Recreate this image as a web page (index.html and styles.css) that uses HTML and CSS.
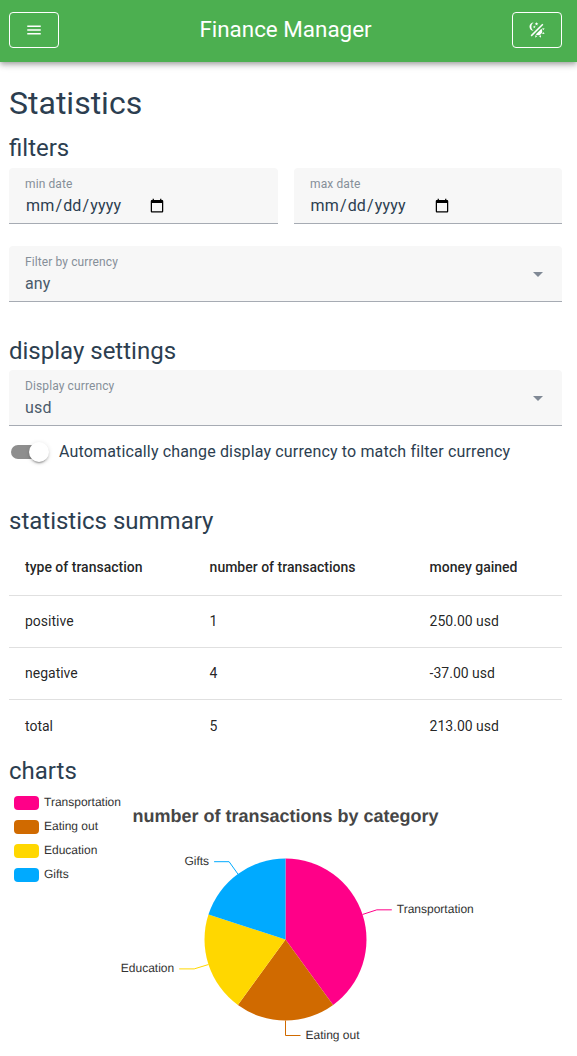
FILE: index.html
```html
<!DOCTYPE html>
<html lang="en">
<head>
<meta charset="utf-8">
<title>Finance Manager</title>
<link rel="stylesheet" href="styles.css">
</head>
<body>
<header class="app-bar">
  <button class="icon-button" aria-label="Menu">
    <svg class="icon" viewBox="0 0 24 24"><path d="M3,6H21V8H3V6M3,11H21V13H3V11M3,16H21V18H3V16Z"/></svg>
  </button>
  <span class="app-title">Finance Manager</span>
  <button class="icon-button" aria-label="Theme">
    <svg class="icon" viewBox="0 0 24 24"><path d="M7.5,2C5.71,3.15 4.5,5.18 4.5,7.5C4.5,9.82 5.71,11.85 7.53,13C4.46,13 2,10.54 2,7.5A5.5,5.5 0 0,1 7.5,2M19.07,3.5L20.5,4.93L4.93,20.5L3.5,19.07L19.07,3.5M12.89,5.93L11.41,5L9.97,6L10.39,4.3L9,3.24L10.75,3.12L11.33,1.47L12,3.1L13.73,3.13L12.38,4.26L12.89,5.93M9.59,9.54L8.43,8.81L7.31,9.59L7.65,8.27L6.56,7.44L7.92,7.35L8.37,6.06L8.88,7.33L10.24,7.36L9.19,8.23L9.59,9.54M19,13.5A5.5,5.5 0 0,1 13.5,19C12.28,19 11.15,18.6 10.24,17.93L17.93,10.24C18.6,11.15 19,12.28 19,13.5M14.6,20.08L17.37,18.93L17.13,22.28L14.6,20.08M18.93,17.38L20.08,14.61L22.28,17.15L18.93,17.38M20.08,12.42L18.94,9.64L22.28,9.88L20.08,12.42M9.63,18.93L12.4,20.08L9.87,22.27L9.63,18.93Z"/></svg>
  </button>
</header>
<main class="page">
  <h1 class="page-title">Statistics</h1>

  <section class="filters">
    <h2 class="section-title">filters</h2>
    <div class="date-row">
      <label class="field"><span class="field-label">min date</span><input class="date-input" type="date"></label>
      <label class="field"><span class="field-label">max date</span><input class="date-input date-input-max" type="date"></label>
    </div>
    <div class="field select">
      <div class="select-text"><span class="field-label">Filter by currency</span><span class="field-value">any</span></div>
      <svg class="arrow" viewBox="0 0 10 5"><path d="M0 0h10L5 5z"/></svg>
    </div>
  </section>

  <section class="display">
    <h2 class="section-title">display settings</h2>
    <div class="field select">
      <div class="select-text"><span class="field-label">Display currency</span><span class="field-value">usd</span></div>
      <svg class="arrow" viewBox="0 0 10 5"><path d="M0 0h10L5 5z"/></svg>
    </div>
    <div class="switch-row">
      <span class="track"><span class="thumb"></span></span>
      <span>Automatically change display currency to match filter currency</span>
    </div>
  </section>

  <section class="summary">
    <h2 class="section-title">statistics summary</h2>
    <table class="table">
      <colgroup><col class="col-type"><col class="col-count"><col></colgroup>
      <thead><tr><th>type of transaction</th><th>number of transactions</th><th>money gained</th></tr></thead>
      <tbody>
        <tr><td>positive</td><td>1</td><td>250.00 usd</td></tr>
        <tr><td>negative</td><td>4</td><td>-37.00 usd</td></tr>
        <tr><td>total</td><td>5</td><td>213.00 usd</td></tr>
      </tbody>
    </table>
  </section>

  <section class="charts">
    <h2 class="section-title">charts</h2>
    <svg class="chart" width="553" height="270" viewBox="0 0 553 270">
      <g class="legend">
        <rect x="5" y="10" width="25" height="14" rx="4" fill="#ff0088"/><text x="35" y="20">Transportation</text>
        <rect x="5" y="34" width="25" height="14" rx="4" fill="#d06a00"/><text x="35" y="44">Eating out</text>
        <rect x="5" y="58" width="25" height="14" rx="4" fill="#ffd700"/><text x="35" y="68">Education</text>
        <rect x="5" y="82" width="25" height="14" rx="4" fill="#00aaff"/><text x="35" y="92">Gifts</text>
      </g>
      <text class="chart-title" x="276.5" y="36">number of transactions by category</text>
      <g transform="translate(276.5 153.5)">
        <path fill="#ff0088" d="M0 0V-81A81 81 0 0 1 47.61 65.53Z"/>
        <path fill="#d06a00" d="M0 0L47.61 65.53A81 81 0 0 1 -47.61 65.53Z"/>
        <path fill="#ffd700" d="M0 0L-47.61 65.53A81 81 0 0 1 -77.04 -25.03Z"/>
        <path fill="#00aaff" d="M0 0L-77.04 -25.03A81 81 0 0 1 0 -81Z"/>
        <g class="leaders">
          <path stroke="#ff0088" d="M77.04 -25.03L91.3 -29.67H106.3"/>
          <path stroke="#d06a00" d="M0 81V96H15"/>
          <path stroke="#ffd700" d="M-77.04 25.03L-91.3 29.4H-106.3"/>
          <path stroke="#00aaff" d="M-47.61 -65.53L-56.4 -77.8H-71.4"/>
        </g>
        <text x="111.3" y="-27">Transportation</text>
        <text x="20" y="99">Eating out</text>
        <text class="label-left" x="-111.3" y="32">Education</text>
        <text class="label-left" x="-76.4" y="-75">Gifts</text>
      </g>
    </svg>
  </section>
</main>
</body>
</html>
```
FILE: styles.css
```css
* { box-sizing: border-box; }
html, body { height: 1056px; overflow: hidden; }
body {
  margin: 0;
  background: #fff;
  color: #2c3e50;
  font: 16px/24px Roboto, sans-serif;
}
.app-bar {
  display: flex;
  align-items: center;
  justify-content: space-between;
  height: 62px;
  padding: 0 15px 2px 9px;
  background: #4caf50;
  color: #fff;
  box-shadow: 0 2px 4px -1px rgba(0,0,0,.2), 0 4px 5px rgba(0,0,0,.14), 0 1px 10px rgba(0,0,0,.12);
}
.app-title { padding-bottom: 2px; font-size: 22.4px; line-height: 26px; }
.icon-button {
  display: flex;
  align-items: center;
  justify-content: center;
  width: 50px;
  height: 36px;
  padding: 0;
  border: 1px solid #fff;
  border-radius: 4px;
  background: transparent;
  color: #fff;
}
.icon { width: 18px; height: 18px; fill: currentColor; }
.page { padding: 22px 15px 0 9px; }
.page-title { margin: 0; height: 50px; font-size: 32px; line-height: 38px; font-weight: 400; }
.section-title { margin: 0; height: 34px; font-size: 24px; line-height: 28px; font-weight: 400; }
.filters { height: 203px; }
.display { height: 170px; }
.display .section-title { height: 33px; }
.summary { height: 250px; }
.date-row { display: grid; grid-template-columns: 269px 268px; gap: 16px; margin-bottom: 22px; }
.field {
  display: flex;
  flex-direction: column;
  height: 56px;
  padding: 8px 16px 0;
  background: #f7f7f7;
  border-bottom: 1px solid #a6abb3;
  border-radius: 4px 4px 0 0;
}
.field-label { font-size: 12px; line-height: 16px; letter-spacing: .11px; color: #868f99; }
.date-input {
  width: auto;
  height: 26px;
  align-self: flex-start;
  padding: 0;
  border: 0;
  background: none;
  color: #2c3e50;
  font: 16px Roboto, sans-serif;
  letter-spacing: .15px;
}
.date-input-max { margin-left: -.5px; }
.date-input::-webkit-calendar-picker-indicator { transform: translateY(1px); }
.select { flex-direction: row; justify-content: space-between; padding-right: 19px; }
.select-text { display: flex; flex-direction: column; }
.field-value { line-height: 28px; letter-spacing: .15px; color: #4b5b6b; }
.arrow { width: 10px; height: 5px; margin-top: 18px; fill: #808995; }
.switch-row { display: flex; align-items: center; gap: 16px; height: 52px; padding-left: 2px; letter-spacing: .15px; }
.track { width: 32px; height: 14px; border-radius: 7px; background: #8e8e8e; }
.thumb {
  display: block;
  width: 20px;
  height: 20px;
  margin: -3px 0 0 18px;
  border-radius: 50%;
  background: #fff;
  box-shadow: 0 3px 1px -2px rgba(0,0,0,.2), 0 2px 2px rgba(0,0,0,.14), 0 1px 5px rgba(0,0,0,.12);
}
.summary .section-title { height: 32px; }
.table {
  width: 100%;
  table-layout: fixed;
  border-collapse: separate;
  border-spacing: 0;
  color: rgba(0,0,0,.87);
  font-size: 14px;
  line-height: 20px;
}
.col-type { width: 184.6px; }
.col-count { width: 220px; }
.table th, .table td { padding: 0 16px; text-align: left; border-bottom: 1px solid #e0e0e0; }
.table th { height: 57px; font-weight: 500; }
.table td { height: 52px; padding-bottom: 1px; }
.table tr:last-child td { padding-bottom: 0; border-bottom: 0; }
.charts .section-title { height: 29px; }
.chart { display: block; font: 12px "Liberation Sans", Arial, sans-serif; fill: #333; text-rendering: geometricPrecision; }
.chart-title { font-size: 18px; font-weight: 700; fill: #464646; text-anchor: middle; }
.label-left { text-anchor: end; }
.leaders { fill: none; stroke-width: 1; }
```
